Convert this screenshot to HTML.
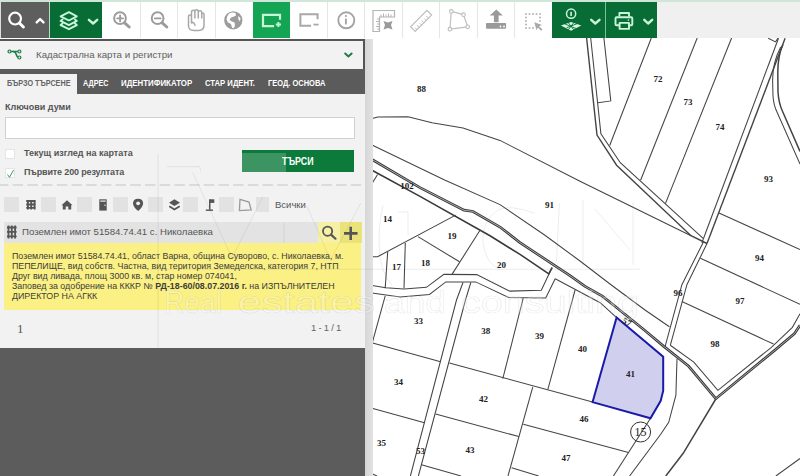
<!DOCTYPE html>
<html><head><meta charset="utf-8">
<style>
*{margin:0;padding:0;box-sizing:border-box}
html,body{width:800px;height:476px;overflow:hidden;background:#fff;font-family:"Liberation Sans",sans-serif}
.a{position:absolute}
.sep{position:absolute;top:2px;width:1px;height:36px;background:#e6e6e6}
.tab{position:absolute;top:79px;font-size:8.2px;font-weight:bold;color:#fff;white-space:nowrap;line-height:10px;transform-origin:0 0}
.sq{position:absolute;top:197px;width:15px;height:15px;background:#e2e2e2}
.lbl{font-family:"Liberation Serif",serif;font-weight:bold;font-size:9px;fill:#222;text-anchor:middle}
</style></head>
<body>
<!-- MAP -->
<svg class="a" style="left:0;top:0" width="800" height="476" viewBox="0 0 800 476">
<g fill="none" stroke="#444" stroke-width="1.05">
<!-- line A -->
<polyline points="372,118.5 378,117 408,116.7 432,122.7 463,128 500,140.4 580,181.3 691,235.7"/>
<!-- line B -->
<polyline points="372,145 444.6,180 500,204.6 544.6,235 580,261 610,284 645,310 669.4,326.8"/>
<!-- road1 upper double -->
<polyline points="372,159.5 420,187.6 464,210.2 473,211.5 500,227 520,242.6 570,275.7 585.1,286.4 602.7,296.4 615.3,306.5 644.3,330 663.5,346.1 688.7,366.3 715.8,398.7 774.6,350.4 794.5,333.6 800,325.2" stroke-width="2.7" stroke="#383838"/>
<polyline points="372,159.5 420,187.6 464,210.2 473,211.5 500,227 520,242.6 570,275.7 585.1,286.4 602.7,296.4 615.3,306.5 644.3,330 663.5,346.1 688.7,366.3 715.8,398.7 774.6,350.4 794.5,333.6 800,325.2" stroke-width="0.7" stroke="#ddd"/>
<!-- road1 lower edge (thick) -->
<polyline points="372,170.2 420,196.4 490,235.8 520,254.4 548.8,273.8 552.1,267.6" stroke-width="1.6" stroke="#3a3a3a"/>
<polyline points="555.2,278.7 600.2,302.7 616.6,317.6"/>
<polyline points="670.3,345.3 693.8,362.1 717.9,390.3 771.4,347.3 792.4,327.3 800,313.7"/>
<!-- vertical road top -->
<polyline points="586.6,38 597,135.1 616.6,165.2 691,235.7 707,243.5" stroke-width="1.4"/>
<polyline points="590.7,38 600.9,133.9 620.3,162.7 703.4,238.7 701.9,243 " />
<polyline points="603.9,38 610.8,100.9 598.1,102.7"/>
<line x1="651.3" y1="38" x2="609.7" y2="145.5"/>
<line x1="697.2" y1="38" x2="640.6" y2="180.2"/>
<line x1="731.6" y1="38" x2="665.4" y2="203.6"/>
<!-- NE road -->
<polyline points="778.5,38.2 703.4,238.7"/>
<polyline points="785.1,38.2 707,243.5" stroke-width="1.4"/>
<polyline points="768.2,38.2 775.6,41.9 778,38"/>
<path d="M780.7,47 C776,56 772.6,68 772.6,80 L773,96 C773.5,103 774.5,107 777,112 L800,164"/>
<path d="M783,44.5 C779.5,52 777.8,62 777.8,72.8 L778,92 C778.5,100 780,106 782.6,111.5 L800,151.4" stroke-width="1.5"/>
<!-- south road from junction -->
<polyline points="703.4,242 681.9,284.7 665.2,346.1"/>
<polyline points="707,243.5 686.9,284.7 670.3,345.3"/>
<line x1="719" y1="213" x2="800" y2="249.6"/>
<line x1="700.4" y1="258.3" x2="800" y2="304.3"/>
<line x1="681.9" y1="301.6" x2="773.5" y2="344.1"/>
<!-- below V -->
<polyline points="715.8,399 683.2,453.3 665.8,476" stroke-width="1.5"/>
<polyline points="677,358.7 675.9,395.1 668.7,422.4 660.7,434.3 629.6,476"/>
<line x1="650.5" y1="418.3" x2="613.4" y2="476"/>
<line x1="775.9" y1="476" x2="800" y2="458.5"/>
<!-- left lower parcels -->
<polyline points="372.5,256.7 377.6,256.7 455.7,215.1"/>
<line x1="418" y1="236.6" x2="459.5" y2="261.8"/>
<line x1="480" y1="230.3" x2="452" y2="274.4"/>
<line x1="387.7" y1="251.7" x2="385.2" y2="288.2"/>
<line x1="405.3" y1="242.9" x2="404" y2="288.2"/>
<line x1="377.6" y1="174.4" x2="372.5" y2="182.8"/>
<!-- curved road west -->
<polyline points="372,285.6 385.8,287.8 403.9,289 426.4,287.3 443.9,274.4 476.7,274.6 509.7,291.1 541.3,290.3 552.1,267.6"/>
<polyline points="372,293.1 400.1,296.9 429.5,294.4 445.8,281.9 475.7,281.9 508.6,297.5 545.7,297.9 555.2,278.7"/>
<!-- road down-left -->
<polyline points="463,282.5 456.5,300 410.4,476"/>
<polyline points="470.8,282.5 465.5,300 418.4,476"/>
<line x1="385.2" y1="295.8" x2="372.6" y2="341.6"/>
<line x1="372.6" y1="342.9" x2="440.6" y2="361.8"/>
<line x1="449.4" y1="363" x2="592.6" y2="402.1"/>
<line x1="372" y1="408.2" x2="424.5" y2="422.8"/>
<line x1="435.6" y1="413.9" x2="518.8" y2="436.6"/>
<line x1="421.5" y1="464.7" x2="461" y2="476"/>
<line x1="372" y1="473.8" x2="377" y2="476"/>
<!-- middle lower parcels -->
<line x1="523.2" y1="298.2" x2="502.8" y2="378.7"/>
<line x1="575.1" y1="290" x2="547.8" y2="389.7"/>
<line x1="532.8" y1="386.9" x2="508" y2="476"/>
<line x1="511.6" y1="467.7" x2="538.7" y2="476"/>
<line x1="523.3" y1="424.3" x2="628.5" y2="452.6"/>
</g>
<!-- parcel 41 -->
<polygon points="616.6,317.6 663.2,356.7 663.2,390.7 660.7,400.8 650.5,418.3 592.6,402.1" fill="#d0d0ee" stroke="#1a1aa8" stroke-width="2"/>
<circle cx="640.6" cy="432" r="10" fill="none" stroke="#333" stroke-width="1"/>
<text x="640.6" y="436" font-family="Liberation Serif" font-size="12" fill="#222" text-anchor="middle">15</text>
<g class="lbl">
<text class="lbl" x="421.5" y="92">88</text>
<text class="lbl" x="549.5" y="208">91</text>
<text class="lbl" x="658" y="82">72</text>
<text class="lbl" x="688" y="104.5">73</text>
<text class="lbl" x="720" y="130">74</text>
<text class="lbl" x="768.5" y="182">93</text>
<text class="lbl" x="759.5" y="260.5">94</text>
<text class="lbl" x="740" y="304">97</text>
<text class="lbl" x="715" y="347">98</text>
<text class="lbl" x="678" y="296">96</text>
<text class="lbl" x="407" y="189">102</text>
<text class="lbl" x="387.5" y="222">14</text>
<text class="lbl" x="452" y="239">19</text>
<text class="lbl" x="396.5" y="270">17</text>
<text class="lbl" x="425.5" y="265.5">18</text>
<text class="lbl" x="501.5" y="267.5">20</text>
<text class="lbl" x="418.5" y="323.5">33</text>
<text class="lbl" x="398.5" y="384.5">34</text>
<text class="lbl" x="381.5" y="446">35</text>
<text class="lbl" x="420.5" y="454">53</text>
<text class="lbl" x="485.8" y="333.5">38</text>
<text class="lbl" x="539.6" y="339">39</text>
<text class="lbl" x="582.5" y="351.5">40</text>
<text class="lbl" x="630.4" y="376.5">41</text>
<text class="lbl" x="483.6" y="402">42</text>
<text class="lbl" x="470" y="453">43</text>
<text class="lbl" x="584" y="422">46</text>
<text class="lbl" x="566" y="460.5">47</text>
<text class="lbl" x="627" y="325" transform="rotate(28 627 322)">57</text>
</g>
</svg>

<!-- TOOLBAR -->
<div class="a" style="left:0;top:0;width:800px;height:2px;background:#d0e6d8"></div>
<div class="a" style="left:0;top:2px;width:1px;height:36px;background:#d8e0da"></div>
<div class="a" style="left:1px;top:2px;width:48px;height:36px;background:#5e5e5e"></div>
<div class="a" style="left:49px;top:2px;width:1px;height:36px;background:#b9dcc6"></div>
<div class="a" style="left:50px;top:2px;width:52px;height:36px;background:#086d35"></div>
<div class="a" style="left:102px;top:2px;width:450px;height:36px;background:#fff"></div>
<div class="sep" style="left:140px"></div>
<div class="sep" style="left:177px"></div>
<div class="sep" style="left:215px"></div>
<div class="a" style="left:253px;top:2px;width:37px;height:36px;background:#13a553"></div>
<div class="sep" style="left:327px"></div>
<div class="sep" style="left:364px"></div>
<div class="sep" style="left:402px"></div>
<div class="sep" style="left:439px"></div>
<div class="sep" style="left:477px"></div>
<div class="sep" style="left:514px"></div>
<div class="a" style="left:552px;top:2px;width:105px;height:36px;background:#086d35"></div>
<div class="a" style="left:605px;top:2px;width:1px;height:36px;background:#7fbf97"></div>
<div class="a" style="left:657px;top:2px;width:143px;height:36px;background:#f0f0f0"></div>


<svg class="a" style="left:0;top:0" width="800" height="40" viewBox="0 0 800 40">
<g fill="none" stroke-linecap="round" stroke-linejoin="round">
<!-- search white -->
<circle cx="15.1" cy="18.6" r="5.9" stroke="#fff" stroke-width="2.2"/>
<line x1="19.6" y1="23.3" x2="23.4" y2="27" stroke="#fff" stroke-width="3"/>
<polyline points="36.7,22.4 40.1,19 43.5,22.4" stroke="#fff" stroke-width="2.4"/>
<!-- layers -->
<path d="M60.6,16.4 L68.9,12.2 L76.8,16.4 L68.9,20.5 Z" stroke="#c9f5dc" stroke-width="1.9"/>
<path d="M62.5,19.4 L60.6,20.9 L68.9,25.1 L76.8,20.9 L75,19.4" stroke="#c9f5dc" stroke-width="1.9"/>
<path d="M62.5,23.6 L60.6,25.1 L68.9,29.2 L76.8,25.1 L75,23.6" stroke="#c9f5dc" stroke-width="1.9"/>
<polyline points="88.9,19.8 93.1,23.5 97.2,19.8" stroke="#c9f5dc" stroke-width="2.4"/>
<!-- zoom in -->
<circle cx="120" cy="18.2" r="5.9" stroke="#9c9c9c" stroke-width="2"/>
<line x1="124.6" y1="22.8" x2="129.2" y2="27" stroke="#9c9c9c" stroke-width="3"/>
<path d="M117.2,18.4 H123 M120.1,15.5 V21.3" stroke="#9c9c9c" stroke-width="1.9"/>
<!-- zoom out -->
<circle cx="157.6" cy="18.2" r="5.9" stroke="#9c9c9c" stroke-width="2"/>
<line x1="162.2" y1="22.8" x2="166.8" y2="27" stroke="#9c9c9c" stroke-width="3"/>
<path d="M154.8,18.4 H160.6" stroke="#9c9c9c" stroke-width="1.9"/>
<!-- hand -->
<path d="M191.5,23 V13.5 M191.5,16.5 V12 Q191.5,10.3 193.2,10.3 Q194.9,10.3 194.9,12 V18 M194.9,11.8 Q194.9,9.8 196.6,9.8 Q198.3,9.8 198.3,11.8 V18 M198.3,12.5 Q198.3,10.8 200,10.8 Q201.7,10.8 201.7,12.5 V18 M201.7,14.5 Q201.7,13 203,13 Q204,13 204,14.5 V25 Q204,30.5 198.5,30.5 H194 Q189,30.5 188.5,26 V16.5 Q188.5,15 190,15 Q191.5,15 191.5,16.5" stroke="#a8a8a8" stroke-width="1.5"/>
<path d="M191.5,22 Q194.5,22.5 195,25.5" stroke="#a8a8a8" stroke-width="1.3"/>
<!-- globe -->
<circle cx="233.3" cy="20.3" r="9.1" fill="#9c9c9c"/>
<path d="M229,13.5 Q232,12 235.5,13 L236,15.5 Q233.5,17 231,17.5 L229.5,20 L232,21.5 L234.5,22.5 L235,26 L233.5,28.5 L232,27.5 L231,24 L228,22.5 L226.5,19.5 Q227,15.5 229,13.5 Z M238,16 L240.5,18 L240,21.5 L238.5,19.5 Z" fill="#fff"/>
<!-- rect plus -->
<path d="M280,19.8 V14.8 H263 V26.2 H274.1" stroke="#c5f7d6" stroke-width="2.2" stroke-linecap="butt" stroke-linejoin="miter"/>
<path d="M275.8,24.5 H281 M278.4,21.9 V27.1" stroke="#c5f7d6" stroke-width="1.9" stroke-linecap="butt"/>
<!-- rect minus -->
<path d="M317.6,19.3 V14.2 H300.4 V25.8 H311.1" stroke="#a8a8a8" stroke-width="2" stroke-linecap="butt" stroke-linejoin="miter"/>
<path d="M313.5,24.6 H318.6" stroke="#a8a8a8" stroke-width="1.8" stroke-linecap="butt"/>
<!-- info -->
<circle cx="346.3" cy="20.3" r="8" stroke="#a4a4a4" stroke-width="1.9"/>
<circle cx="345.9" cy="16" r="1.1" fill="#a4a4a4"/>
<line x1="345.9" y1="18.6" x2="345.9" y2="24.4" stroke="#a4a4a4" stroke-width="1.9" stroke-linecap="butt"/>
<!-- corner ruler -->
<path d="M373,10.5 H394.5 V17 H379.5 V31.5 H373 Z" stroke="#b4b4b4" stroke-width="1.2" stroke-linecap="butt" stroke-linejoin="miter"/>
<path d="M381,17 V14.5 M383.5,17 V13.5 M386,17 V14.5 M388.5,17 V13.5 M391,17 V14.5 M379.5,19 H377 M379.5,21.5 H376 M379.5,24 H377 M379.5,26.5 H376 M379.5,29 H377" stroke="#b4b4b4" stroke-width="1" stroke-linecap="butt"/>
<path d="M383.5,21 L388,22.5 L392.5,21 L391,25 L392.5,29.5 L388,28 L383.5,29.5 L385,25 Z" fill="#9a9a9a"/>
<!-- ruler -->
<path d="M410.5,26.8 L426.9,10.4 L431.6,15.1 L415.2,31.5 Z" stroke="#bdbdbd" stroke-width="1.2" stroke-linejoin="miter"/>
<path d="M417,29.7 L415.5,28.2 M419.3,27.4 L417.3,25.4 M421.6,25.1 L420.1,23.6 M423.9,22.8 L421.9,20.8 M426.2,20.5 L424.7,19 M428.5,18.2 L426.5,16.2" stroke="#bdbdbd" stroke-width="1"/>
<!-- polygon -->
<path d="M451.3,11.4 L463.5,14.7 L467.7,26.8 L449.9,29.2 Z" stroke="#c0c0c0" stroke-width="1.2"/>
<g fill="#fff" stroke="#bdbdbd" stroke-width="1.1"><circle cx="451.3" cy="11.4" r="1.8"/><circle cx="463.5" cy="14.7" r="1.8"/><circle cx="467.7" cy="26.8" r="1.8"/><circle cx="449.9" cy="29.2" r="1.8"/></g>
<!-- upload -->
<path d="M496.3,9.5 L489.7,15.6 H493.9 V22.2 H498.6 V15.6 H502.8 Z" fill="#9a9a9a"/>
<rect x="486" y="23.1" width="20.1" height="5.6" rx="1" fill="#9a9a9a"/>
<circle cx="500.5" cy="26.5" r="0.9" fill="#fff"/><circle cx="504" cy="26.5" r="0.9" fill="#fff"/>
<!-- select -->
<g fill="#a8a8a8">
<rect x="525.2" y="13.2" width="1.6" height="1.6"/><rect x="528.7" y="13.2" width="1.6" height="1.6"/><rect x="532.2" y="13.2" width="1.6" height="1.6"/><rect x="535.7" y="13.2" width="1.6" height="1.6"/><rect x="539.2" y="13.2" width="1.6" height="1.6"/>
<rect x="525.2" y="16.7" width="1.6" height="1.6"/><rect x="539.2" y="16.7" width="1.6" height="1.6"/>
<rect x="525.2" y="20.2" width="1.6" height="1.6"/><rect x="539.2" y="20.2" width="1.6" height="1.6"/>
<rect x="525.2" y="23.7" width="1.6" height="1.6"/>
<rect x="525.2" y="27.2" width="1.6" height="1.6"/><rect x="528.7" y="27.2" width="1.6" height="1.6"/><rect x="532.2" y="27.2" width="1.6" height="1.6"/>
<path d="M534.2,22.2 L542,25 L539,26.2 L542.5,29.5 L541.2,30.8 L537.8,27.4 L536.6,30.2 Z"/>
</g>
<!-- info layers -->
<circle cx="571.1" cy="13.7" r="4.6" stroke="#c9f5dc" stroke-width="1.5"/>
<line x1="571.1" y1="11.8" x2="571.1" y2="16" stroke="#c9f5dc" stroke-width="1.6" stroke-linecap="butt"/>
<path d="M560.9,25.4 L571.1,22 L581.3,25.4 L571.1,30.7 Z" fill="#d8f7e4"/>
<path d="M565,24 L576,28.5 M567,27.6 L577.6,23.5 M568.5,23 L573.5,29.5 M573.5,23 L568.5,29.5" stroke="#0a6e37" stroke-width="0.9"/>
<polyline points="591.2,19.8 595.3,23.5 599.5,19.8" stroke="#c9f5dc" stroke-width="2.4"/>
<!-- printer -->
<path d="M619.4,16.4 V13 H629 V16.4" stroke="#c9f5dc" stroke-width="1.9" stroke-linecap="butt"/>
<path d="M619,25.2 H616.5 Q615.5,25.2 615.5,24.2 V18.4 Q615.5,17.3 616.6,17.3 H631.2 Q632.3,17.3 632.3,18.4 V24.2 Q632.3,25.2 631.3,25.2 H629.6" stroke="#c9f5dc" stroke-width="1.9" stroke-linecap="butt"/>
<rect x="619.6" y="22.9" width="9.4" height="6" stroke="#c9f5dc" stroke-width="1.9"/>
<circle cx="628.4" cy="20.1" r="0.8" fill="#c9f5dc"/>
<polyline points="644.3,19.8 648.1,23.5 652.2,19.8" stroke="#c9f5dc" stroke-width="2.4"/>
</g>
</svg>

<!-- PANEL -->
<div class="a" style="left:0;top:38px;width:365px;height:1px;background:#fff"></div>
<div class="a" style="left:0;top:39px;width:365px;height:437px;background:#f2f2f2"></div>
<div class="a" style="left:365px;top:39px;width:8px;height:437px;background:linear-gradient(90deg,#d6d6d6,#e2e2e2)"></div>
<div class="a" style="left:0;top:39px;width:365px;height:1.5px;background:#555"></div>
<div class="a" style="left:363px;top:39px;width:2px;height:30px;background:#555"></div>
<div class="a" style="left:36px;top:49px;font-size:9.7px;line-height:12px;color:#606060;white-space:nowrap">Кадастрална карта и регистри</div>
<svg class="a" style="left:0;top:40px" width="365" height="29" viewBox="0 40 365 29">
<g fill="none" stroke="#1f7a4a" stroke-width="1.6" stroke-linecap="round">
<path d="M11,51.5 H17.5"/><path d="M13.5,51.5 Q15.5,51.8 16.5,55 Q17.2,57.3 18,57.4"/>
<circle cx="9.5" cy="51.5" r="1.5" fill="#c9f5dc" stroke-width="1.2"/><circle cx="19.4" cy="51.5" r="1.5" fill="#c9f5dc" stroke-width="1.2"/><circle cx="19.4" cy="57.5" r="1.5" fill="#c9f5dc" stroke-width="1.2"/>
<polyline points="345.2,53.5 348.4,56.5 351.6,53.5" stroke-width="2"/>
</g></svg>
<div class="a" style="left:0;top:69px;width:365px;height:25px;background:#5b5b5b"></div>
<div class="a" style="left:0;top:73.5px;width:77px;height:21px;background:#f2f2f2"></div>
<div class="tab" style="left:6.8px;color:#666;transform:scaleX(0.884)">БЪРЗО ТЪРСЕНЕ</div>
<div class="tab" style="left:82.9px;transform:scaleX(0.885)">АДРЕС</div>
<div class="tab" style="left:121px;transform:scaleX(0.962)">ИДЕНТИФИКАТОР</div>
<div class="tab" style="left:204.6px;transform:scaleX(0.938)">СТАР ИДЕНТ.</div>
<div class="tab" style="left:267.7px;transform:scaleX(0.914)">ГЕОД. ОСНОВА</div>

<div class="a" style="left:5px;top:102px;font-size:9px;font-weight:bold;color:#555">Ключови думи</div>
<div class="a" style="left:5px;top:117px;width:350px;height:22px;background:#fff;border:1px solid #d0d0d0"></div>
<div class="a" style="left:5px;top:149px;width:10px;height:10px;background:#fff;border:1px solid #e4e4e4"></div>
<div class="a" style="left:24px;top:148px;font-size:9px;font-weight:bold;color:#555">Текущ изглед на картата</div>
<div class="a" style="left:5px;top:168px;width:10px;height:10px;background:#fff;border:1px solid #e4e4e4"></div>
<div class="a" style="left:24px;top:167px;font-size:9px;font-weight:bold;color:#555;letter-spacing:-0.15px">Първите 200 резултата</div>
<div class="a" style="left:242px;top:150px;width:112px;height:22px;background:#0b7a3b"></div>
<div class="a" style="left:282px;top:156px;font-size:10px;font-weight:bold;color:#fff;transform:scaleX(0.886);transform-origin:0 0">ТЪРСИ</div>
<div class="a" style="left:242px;top:153px;width:44px;height:19px;background:rgba(255,255,255,0.2)"></div>
<svg class="a" style="left:0;top:184px" width="364" height="2"><line x1="0" y1="1" x2="364" y2="1" stroke="#c4c4c4" stroke-width="1" stroke-dasharray="10.5,4.2" stroke-dashoffset="2"/></svg>
<svg class="a" style="left:5px;top:168px" width="12" height="12"><polyline points="2.5,6.5 4.5,9.3 8.5,2" fill="none" stroke="#3c9a62" stroke-width="1"/></svg>

<div class="sq" style="left:4px"></div>
<div class="sq" style="left:41px"></div>
<div class="sq" style="left:77px"></div>
<div class="sq" style="left:113px"></div>
<div class="sq" style="left:148px"></div>
<div class="sq" style="left:183px"></div>
<div class="sq" style="left:219px"></div>
<div class="sq" style="left:256px;width:13px"></div>
<div class="a" style="left:275px;top:199px;font-size:9.5px;color:#555">Всички</div>

<div class="a" style="left:4px;top:222px;width:314px;height:21px;background:#e3e3e3"></div>
<div class="a" style="left:318px;top:222px;width:22px;height:21px;background:#f5f0a6"></div>
<div class="a" style="left:340px;top:222px;width:22px;height:21px;background:#e9e37a"></div>
<div class="a" style="left:22px;top:226px;font-size:9.65px;color:#555;white-space:nowrap">Поземлен имот 51584.74.41 с. Николаевка</div>

<svg class="a" style="left:0;top:190px" width="365" height="60" viewBox="0 190 365 60">
<g fill="none" stroke="#555" stroke-width="1.9" stroke-linecap="butt">
<path d="M27.9,199.9 V209.4 M31.2,199.9 V209.4 M34.6,199.9 V209.4 M26.2,201 H35.7 M26.2,204.5 H35.7 M26.2,207.9 H35.7"/>
<path d="M8.5,225.5 V238.5 M11.8,225.5 V238.5 M15.1,225.5 V238.5 M7,227.5 H16.6 M7,231.9 H16.6 M7,236.3 H16.6" stroke-width="1.8"/>
</g>
<g fill="#555">
<path d="M67,200.3 L72.5,205.2 H71.2 V209.5 H68.3 V206.5 H65.7 V209.5 H62.8 V205.2 H61.5 Z"/>
<rect x="99.3" y="199.3" width="7.4" height="11.3"/>
<path d="M138.1,198.7 Q143.1,198.7 143.1,203.5 Q143.1,206.5 138.1,211.1 Q133,206.5 133,203.5 Q133,198.7 138.1,198.7 Z"/>
<path d="M174.4,199.3 L180,202.7 L174.4,206.1 L169,202.7 Z"/>
<rect x="209" y="199.3" width="1.5" height="10.5"/><rect x="210" y="199.3" width="4.3" height="3.6"/><rect x="205.8" y="209.5" width="7.2" height="1.4"/>
</g>
<rect x="100.3" y="200.5" width="5.4" height="1.2" fill="#f2f2f2"/>
<circle cx="105" cy="205.2" r="0.7" fill="#f2f2f2"/>
<circle cx="138.1" cy="203.3" r="1.9" fill="#f2f2f2"/>
<polyline points="169.3,206.2 174.4,209.4 179.7,206.2" fill="none" stroke="#555" stroke-width="1.8"/>
<path d="M240,199.3 L249,202.1 L251.2,210 L239.4,210.6 Z" fill="none" stroke="#999" stroke-width="1.3"/>
<circle cx="327.6" cy="231.2" r="4.6" fill="none" stroke="#555" stroke-width="1.8"/>
<line x1="331" y1="234.6" x2="335.5" y2="238.7" stroke="#555" stroke-width="2.2" stroke-linecap="round"/>
<path d="M344,233.4 H357.5 M350.7,226.7 V240.1" stroke="#555" stroke-width="2.6"/>
</svg>
<div class="a" style="left:4px;top:243px;width:357px;height:67px;background:#faf084"></div>
<div class="a" style="left:12px;top:252px;width:345px;font-size:8.85px;line-height:9.95px;color:#3c3c3c">Поземлен имот 51584.74.41, област Варна, община Суворово, с. Николаевка, м. ПЕПЕЛИЩЕ, вид собств. Частна, вид територия Земеделска, категория 7, НТП Друг вид ливада, площ 3000 кв. м, стар номер 074041,<br>Заповед за одобрение на КККР № <b>РД-18-60/08.07.2016 г.</b> на ИЗПЪЛНИТЕЛЕН ДИРЕКТОР НА АГКК</div>

<div class="a" style="left:17px;top:321px;font-family:'Liberation Serif',serif;font-size:13px;color:#555">1</div>
<div class="a" style="left:311px;top:322px;font-size:9.5px;color:#666;letter-spacing:-0.25px">1 - 1 / 1</div>
<div class="a" style="left:0;top:348px;width:365px;height:128px;background:#5c5c5c"></div>
<svg class="a" style="left:0;top:0" width="800" height="476" viewBox="0 0 800 476">
<g font-family="Liberation Sans" font-size="31" fill="rgba(255,255,255,0.25)" stroke="rgba(120,120,120,0.16)" stroke-width="0.7">
<text x="164" y="313" textLength="58" lengthAdjust="spacingAndGlyphs">Real</text>
<text x="237.5" y="313" textLength="137.5" lengthAdjust="spacingAndGlyphs">estates</text>
<text x="384" y="313" textLength="62" lengthAdjust="spacingAndGlyphs">and</text>
<text x="461" y="313" textLength="178" lengthAdjust="spacingAndGlyphs">consulting</text>
</g>
<g fill="none" stroke="rgba(110,110,110,0.16)" stroke-width="0.8">
<line x1="158.1" y1="154" x2="158.1" y2="476"/>
<polyline points="167.3,166.6 199.7,166.6 200.8,171.2"/>
<polyline points="192.7,172.3 232,258 262.6,196.7"/>
<polyline points="306.7,205.5 330.6,260 360.8,203"/>
<line x1="284" y1="223" x2="284" y2="243"/>
<line x1="150" y1="269.3" x2="640" y2="269.3"/>
<path d="M534.4,213.2 Q510,204 497.6,210 Q482,222 482.9,240 Q484,262 500,270"/>
<line x1="559.4" y1="203" x2="556.5" y2="262"/>
<line x1="583" y1="200" x2="583" y2="267.6"/>
<path d="M594.7,208.8 L630,250"/>
<line x1="633" y1="203" x2="633" y2="264.7"/>
<path d="M383,205 Q377,230 380,258 Q383,275 392,285"/>
<path d="M398,212 H408 V235"/>
</g>
</svg>
</body></html>
